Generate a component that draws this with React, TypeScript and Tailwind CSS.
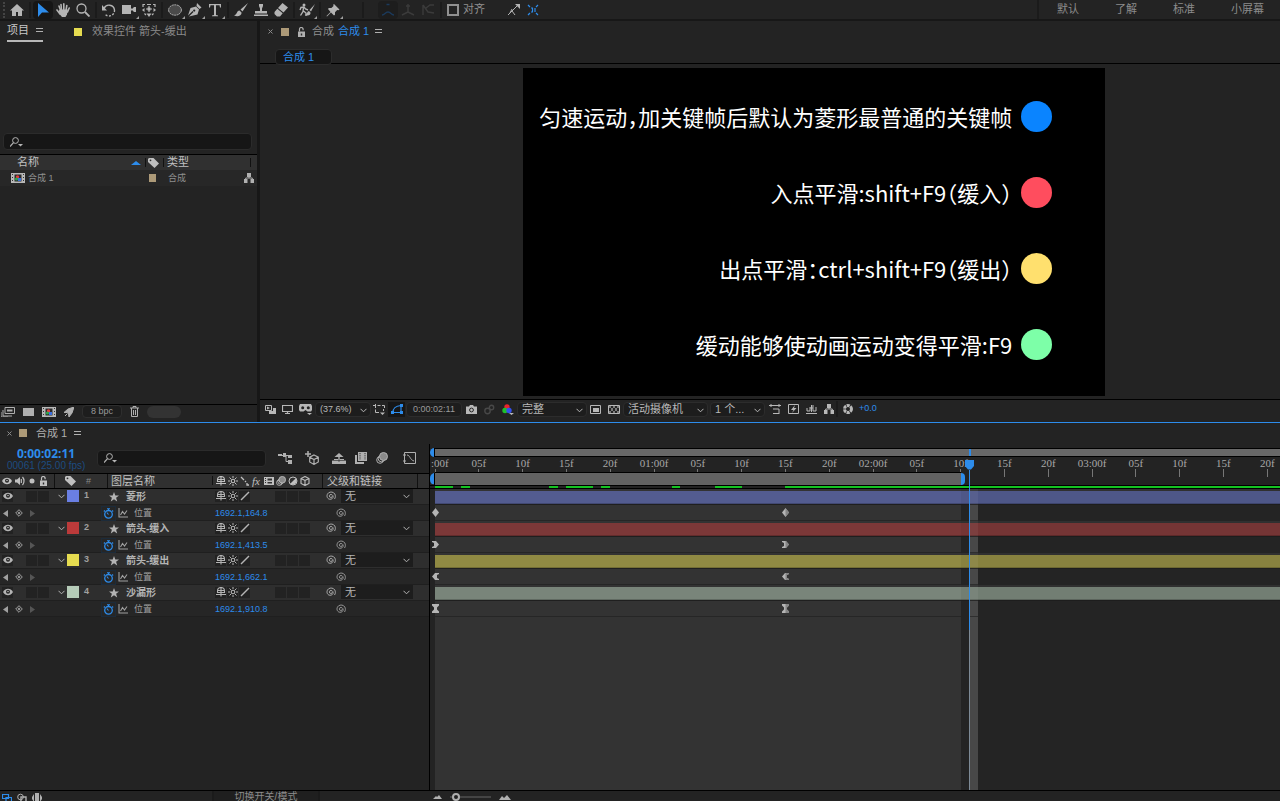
import { ReactNode } from "react";
import clsx from "clsx";

type IconProps = {
  w?: number;
  h?: number;
  box?: string;
  className?: string;
  children: ReactNode;
};

const Icon = ({ w = 14, h = 14, box, className, children }: IconProps) => (
  <svg
    width={w}
    height={h}
    viewBox={box ?? `0 0 ${w} ${h}`}
    fill="currentColor"
    className={clsx("shrink-0", className)}
    aria-hidden="true"
  >
    {children}
  </svg>
);

const line = { fill: "none", stroke: "currentColor" };

const HomeIcon = () => (
  <Icon><path d="M7 1 0 7.500h2V13h4V9h2v4h4V7.500h2z" /></Icon>
);
const ArrowIcon = () => (
  <Icon className="text-[#2d8ceb]"><path d="M2 0v14l4-4.500h7z" /></Icon>
);
const HandIcon = () => (
  <Icon>
    <path d="M3.500 8.500 4.500 7 3 3" {...line} strokeWidth="1.600" strokeLinecap="round" />
    <path d="M5.500 7 5 1.500M7.800 7V.9M10 7.500l.8-5M11.500 9l1.700-4M4 11 1 7" {...line} strokeWidth="1.600" strokeLinecap="round" />
    <path d="M3.500 6.500h8.300L11 11.500 9.500 14H6L3 10.500z" />
  </Icon>
);
const ZoomIcon = () => (
  <Icon>
    <circle cx="5.500" cy="5.500" r="4.500" {...line} strokeWidth="1.300" />
    <path d="m9 9 4.500 4.500" {...line} strokeWidth="1.800" />
  </Icon>
);
const RotateIcon = () => (
  <Icon>
    <path d="M2 5.500A5.500 5.500 0 0 1 12.500 7" {...line} strokeWidth="1.400" />
    <path d="M12.500 7A5.500 5.500 0 0 1 3 11.200" {...line} strokeWidth="1.400" strokeDasharray="2 1.500" />
    <path d="M0 2v5.500h5z" />
  </Icon>
);
const CameraToolIcon = () => (
  <Icon><path d="M0 2h9v3l1 1 2-2h2v5h-2l-2-2-1 1v3H0z" /></Icon>
);
const AnchorIcon = () => (
  <Icon>
    <path d="M5.500 4.500h3v3h-3zM7 14l-2.500-3.500h5zM0 7l2.500-2v4zM14 7l-2.500-2v4z" />
    <path d="M1 4V1.500h2M11 1.500h2V4M5 1.500h4M2.500 10.500l1.500 1.500M11.500 10.500 10 12M7 3v6M4 6h6" {...line} strokeWidth="1.200" />
  </Icon>
);
const EllipseIcon = () => (
  <Icon>
    <ellipse cx="7" cy="7" rx="6.400" ry="5.200" fill="#4a4a4a" stroke="currentColor" strokeDasharray="2 .6" />
  </Icon>
);
const PenIcon = () => (
  <Icon>
    <path d="m9 0 4.500 4.500-2 1.500-3-3zM8 3.500l3 3-1.500 5L1 13.500 5.500 9 4.600 8 0 12.500 2.500 5z" />
    <circle cx="6.200" cy="7.600" r="1.100" fill="#232323" />
  </Icon>
);
const TypeIcon = () => (
  <Icon><path d="M1 1h12v3.500h-1L11.500 2.300H8V12l2 .5v.8H4v-.8l2-.5V2.300H2.500L2 4.500H1z" /></Icon>
);
const BrushIcon = () => (
  <Icon><path d="M14 0 6.500 6.500l2 2zM5.500 7.500c-3 0-2 4-5.500 5 4 1.800 8 0 7.500-3z" /></Icon>
);
const StampIcon = () => (
  <Icon><path d="M5 1h4v2L8 5.500V8h5v2.500H1V8h5V5.500L5 3zM0 11.500h14V13H0z" /></Icon>
);
const EraserIcon = () => (
  <Icon><path d="m8.500 0 5.500 4.500-4.500 5L4 5zM3.300 5.800l5.400 4.500L6 13.500H3L.5 11V9z" /></Icon>
);
const RotoIcon = () => (
  <Icon w={16} box="0 0 16 14">
    <circle cx="5" cy="2" r="1.500" />
    <path d="m1 7 1-2.500 3-.5 1.500 2L9 7M4.500 4.500 4 8.500l-2.500 4M4.500 8 7 10v3" {...line} strokeWidth="1.400" />
    <path d="M16 1 10.500 7l1.500 1.500zM10 8c-2 0-1.500 3-4 4 3 1.500 6 0 5.500-2.500z" />
  </Icon>
);
const PinIcon = () => (
  <Icon><path d="m8 1 5.500 5.500-1 .8-1.300-.3-2.200 2.300v2.500L8 12.500 5 9.500 1 13.500l-.5-.5 4-4-2.500-3 .8-1h2.600L7.500 3 7.200 1.800z" /></Icon>
);
const AxisIcon = ({ d }: { d: string }) => (
  <Icon><path d={d} {...line} strokeWidth="1.400" /></Icon>
);
const SearchGlass = () => (
  <Icon w={14} h={10} className="text-[#b5b5b5]">
    <circle cx="5.500" cy="3.500" r="2.900" {...line} />
    <path d="M3.500 5.700 0 9.500" {...line} strokeWidth="1.200" />
    <path d="M8 7h5l-2.500 2.500z" />
  </Icon>
);
const Chevron = ({ className }: { className?: string }) => (
  <Icon w={7} h={5} className={className}>
    <path d="m.5.8 3 3 3-3" {...line} />
  </Icon>
);
const TagIcon = () => (
  <Icon w={11} h={10}><path d="M0 1 1 0h4.500L11 5.500 6.500 10 0 4z" /><circle cx="2.500" cy="2.300" r=".9" fill="#303030" /></Icon>
);
const CompIcon = () => (
  <Icon w={14} h={10}>
    <path d="M0 0h14v10H0z" fill="#b8b8b8" />
    <path d="M1 1.500h1M1 4.500h1M1 7.500h1M12 1.500h1M12 4.500h1M12 7.500h1" stroke="#333" />
    <path d="M3.500 1.500h7v7h-7z" fill="#2b2b2b" />
    <circle cx="6.500" cy="4" r="1.700" fill="#e23b3b" />
    <circle cx="5.500" cy="6" r="1.600" fill="#2fa84a" />
    <path d="M7 5h3v3H7z" fill="#3a6fe0" />
  </Icon>
);
const FlowIcon = () => (
  <Icon w={10} h={10}>
    <path d="M3 0h4v4H3zM0 6h3.500v4H0zM6.500 6H10v4H6.500z" />
    <path d="M5 3v2M1.700 7V5h6.600v2" {...line} />
  </Icon>
);
const LockIcon = () => (
  <Icon w={8} h={10}>
    <path d="M1 4.500h7V10H1z" />
    <path d="M2.500 4.500V2.300a1.800 1.800 0 0 1 3.600 0v1" {...line} strokeWidth="1.200" />
    <path d="M3.800 6.500h1.400v2H3.800z" fill="#2b2b2b" />
  </Icon>
);
const EyeIcon = () => (
  <Icon w={10} h={8}>
    <path d="M0 4c2.500-4.300 7.500-4.300 10 0-2.500 4.300-7.500 4.300-10 0z" />
    <circle cx="5" cy="3.800" r="2" fill="#262626" />
    <circle cx="5" cy="3.500" r=".8" />
  </Icon>
);
const SpeakerIcon = () => (
  <Icon w={10} h={10}>
    <path d="M0 3.500h2L5 1v8L2 6.500H0z" />
    <path d="M6.300 3v4M7.500 1c2 2.200 2 5.800 0 8" {...line} strokeWidth="1.200" />
  </Icon>
);
const StarIcon = () => (
  <Icon w={10} h={10}><path d="m5 0 1.300 3.400H10L7.100 5.700 8.200 9.500 5 7.300 1.800 9.500l1.100-3.800L0 3.400h3.700z" /></Icon>
);
const ShyIcon = () => (
  <Icon w={10} h={10}>
    <path d="M1.500 5.500V4a3 3 0 0 1 7 0v1.500zM1.500 3.500h7M5 1v8.500M0 7.500h10" {...line} strokeWidth="1.100" />
  </Icon>
);
const SunIcon = () => (
  <Icon w={10} h={10}>
    <circle cx="5" cy="5" r="1.800" {...line} strokeWidth="1.100" />
    <path d="M5 0v2M5 8v2M0 5h2M8 5h2M1.500 1.500 3 3M7 7l1.500 1.500M8.500 1.500 7 3M3 7 1.500 8.500" {...line} />
  </Icon>
);
const SlashIcon = () => (
  <Icon w={10} h={10}><path d="m1 9 3-3 5-5" {...line} strokeWidth="1.500" /></Icon>
);
const CubeIcon = ({ size = 10 }: { size?: number }) => (
  <Icon w={size} h={size} box="0 0 10 10">
    <path d="m5 .5 4 2v5l-4 2-4-2v-5zM1 2.500l4 2 4-2M5 4.500v5" {...line} strokeWidth="1.100" />
  </Icon>
);
const BlurIcon = ({ size = 10 }: { size?: number }) => (
  <Icon w={size} h={size} box="0 0 12 12">
    <circle cx="4" cy="8" r="3.300" {...line} />
    <circle cx="5.500" cy="6.500" r="3.300" {...line} />
    <circle cx="7.500" cy="4.500" r="4" fill="#8a8a8a" stroke="currentColor" />
  </Icon>
);
const FrameBlendIcon = ({ size = 12 }: { size?: number }) => (
  <Icon w={size} h={size} box="0 0 12 12">
    <path d="M3 0h9v9H3z" />
    <path d="M0 3h2v7h7v2H0z" />
    <path d="M5 1v7M10 1v7" stroke="#303030" strokeDasharray="1.200 1" />
  </Icon>
);
const FilmIcon = () => (
  <Icon w={10} h={10}>
    <path d="M0 1h10v8H0z" />
    <path d="M3.500 2.500h4.500v2H3.500zM3.500 6h4.500v1.500H3.500z" fill="#303030" />
    <path d="M1.500 2v6" stroke="#303030" strokeDasharray="1 1" />
  </Icon>
);
const WhipIcon = () => (
  <Icon w={10} h={10}>
    <path d="M6.400 5.200a1.500 1.500 0 1 1-1.300-1.700c1.600.2 2.400 1.600 1.900 3C6.300 8.200 4.200 8.800 2.500 7.800.5 6.500.5 3.500 2.500 1.900c2-1.500 5-1 6.300 1.100.8 1.500.8 3.500-.3 5" {...line} strokeWidth=".9" />
  </Icon>
);
const StopwatchIcon = () => (
  <Icon w={11} h={11} className="text-[#2d8ceb]">
    <circle cx="5.500" cy="6.300" r="3.800" {...line} strokeWidth="1.300" />
    <path d="M4 .7h3M5.500 1v1.500M5.500 6.500 3.800 4.500M9 2.500l1.200 1M2 2.500 .8 3.500" {...line} strokeWidth="1.100" />
  </Icon>
);
const GraphIcon = () => (
  <Icon w={10} h={10}>
    <path d="M1 0v9h9M2.500 7l2-3.500L6.500 6 9 2.500" {...line} strokeWidth="1.100" />
  </Icon>
);

const Sep = () => <span className="w-[6px] h-4 shrink-0 flex justify-center"><span className="w-[2px] bg-[#1b1b1b]" /></span>;

type ToolProps = { label: string; corner?: boolean; active?: boolean; children: ReactNode };

const Tool = ({ label, corner, active, children }: ToolProps) => (
  <button
    aria-label={label}
    className={clsx(
      "relative w-5 h-[18px] shrink-0 flex items-center justify-center rounded-sm",
      active && "bg-[#161616]"
    )}
  >
    {children}
    {corner && (
      <span className="absolute right-0 bottom-0 border-l-[3px] border-b-[3px] border-l-transparent border-b-[#a0a0a0]" />
    )}
  </button>
);

const Toolbar = () => (
  <header className="h-[21px] shrink-0 flex items-center border-b-2 border-[#171717] text-[#b4b4b4]">
    <span className="w-[7px] h-4 shrink-0 flex justify-center">
      <span className="border-l-2 border-dotted border-[#444]" />
    </span>
    <Tool label="主页"><HomeIcon /></Tool>
    <Sep />
    <Tool label="选取工具" active><ArrowIcon /></Tool>
    <Tool label="手形工具"><HandIcon /></Tool>
    <Tool label="缩放工具"><ZoomIcon /></Tool>
    <Sep />
    <Tool label="旋转工具"><RotateIcon /></Tool>
    <Tool label="摄像机工具" corner><CameraToolIcon /></Tool>
    <Tool label="锚点工具"><AnchorIcon /></Tool>
    <Sep />
    <Tool label="椭圆工具" corner><EllipseIcon /></Tool>
    <Tool label="钢笔工具" corner><PenIcon /></Tool>
    <Tool label="文字工具" corner><TypeIcon /></Tool>
    <Sep />
    <Tool label="画笔工具"><BrushIcon /></Tool>
    <Tool label="仿制图章工具"><StampIcon /></Tool>
    <Tool label="橡皮擦工具"><EraserIcon /></Tool>
    <Sep />
    <Tool label="Roto 笔刷工具" corner><RotoIcon /></Tool>
    <Sep />
    <Tool label="人偶位置控点工具" corner><PinIcon /></Tool>
    <div className="ml-[17px] flex items-center text-[#3b3b3b]">
      <Sep />
      <div className="ml-3 flex">
        <span className="text-[#1b3a5c] bg-[#1d1d1d] rounded-sm"><Tool label="本地轴模式"><AxisIcon d="M5.500 1.500h3M1 12c3 0 3-3 6-3s3 3 6 3" /></Tool></span>
        <Tool label="世界轴模式"><AxisIcon d="M7 1v8L1 12M7 9l6 3M5 3h4" /></Tool>
        <Tool label="视图轴模式"><AxisIcon d="M2 12V2M2 2l5 7 6 1M5 5l4-3h4" /></Tool>
      </div>
      <Sep />
    </div>
    <label className="ml-[3px] flex items-center gap-1 text-[11px] text-[#909090]">
      <input type="checkbox" className="appearance-none w-3 h-3 border-2 border-[#909090]" />
      对齐
    </label>
    <button aria-label="对齐边缘" className="ml-[22px]">
      <Icon w={13} h={12}><path d="M1 11 5 7l5-5M5 7l3 4M3 9l2-4" {...line} /><path d="M8 0h5v5l-2-2z" /></Icon>
    </button>
    <button aria-label="对齐要素" className="ml-[7px] text-[#2d8ceb]">
      <Icon w={12} h={12}><path d="m1 1 2 2M11 1 9 3M1 11l2-2M11 11 9 9M4 4h1.500v4H4M8 4v4" {...line} strokeWidth="1.200" /></Icon>
    </button>
    <nav className="ml-auto h-full flex items-center gap-[36px] pl-[18px] pr-[16px] border-l-2 border-[#1b1b1b] text-[11px] text-[#8c8c8c]">
      <a href="#default">默认</a>
      <a href="#learn">了解</a>
      <a href="#standard">标准</a>
      <a href="#small">小屏幕</a>
    </nav>
  </header>
);

const MenuLines = () => (
  <Icon w={7} h={5} className="text-[#b0b0b0]"><path d="M0 0h7v1H0zM0 3h7v1H0z" /></Icon>
);
const CloseIcon = () => (
  <Icon w={5} h={5} className="text-[#8a8a8a]"><path d="m.5.5 4 4M4.500.5l-4 4" {...line} /></Icon>
);

const Cut = () => <span className="absolute left-0 top-[3px] h-[9px] border-l border-[#111]" />;

const ProjectPanel = () => (
  <section className="w-[257px] shrink-0 flex flex-col text-[#a8a8a8]">
    <div className="h-[21px] flex items-center text-[11px]">
      <button className="h-full ml-[7px] flex items-center gap-[7px] border-b-2 border-[#b8b8b8] text-[#c8c8c8]">
        项目
        <MenuLines />
      </button>
      <button className="ml-[31px] flex items-center gap-[10px] text-[11px] text-[#8a8a8a]">
        <span className="w-2 h-2 bg-[#e6dc50]" />
        效果控件 箭头-缓出
      </button>
    </div>
    <label className="mt-[91px] ml-[3px] mr-[5px] h-[17px] flex items-center gap-1 px-[6px] rounded-sm border border-[#2b2b2b] bg-[#161616]">
      <SearchGlass />
      <input type="text" aria-label="搜索项目" className="flex-1 min-w-0 bg-transparent outline-none text-[10px]" />
    </label>
    <table className="mt-1 w-full table-fixed text-left text-[11px] leading-[15px]">
      <thead className="bg-[#303030] border-t border-black text-[#c0c0c0]">
        <tr className="h-[15px]">
          <th className="relative w-[145px] p-0 pl-[17px] font-normal">
            名称
            <span className="absolute right-[4px] top-[6px] border-x-[5px] border-b-[4px] border-x-transparent border-b-[#2d8ceb]" />
          </th>
          <th className="relative w-[18px] p-0 pl-[3px]"><Cut /><TagIcon /></th>
          <th className="relative p-0 pl-[4px] font-normal"><Cut />类型</th>
          <th className="relative w-[7px] p-0"><Cut /></th>
        </tr>
      </thead>
      <tbody className="text-[9px] leading-[16px] bg-[#272727] text-[#8f8f8f]">
        <tr className="h-4">
          <td className="p-0 pl-[11px]"><div className="flex items-center gap-[3px]"><CompIcon />合成 1</div></td>
          <td className="p-0 pl-[4px]"><div className="w-[7px] h-2 bg-[#ad9a78]" /></td>
          <td className="p-0 pl-[5px]">合成</td>
          <td className="relative p-0 text-[#b0b0b0]"><div className="flex justify-end w-[10px] -ml-[6px]"><FlowIcon /></div></td>
        </tr>
      </tbody>
    </table>
    <footer className="mt-auto mb-[3px] h-[15px] border-t border-black flex items-center gap-2 pl-[1px] text-[#b0b0b0]">
      <button aria-label="解释素材"><Icon w={14} h={10}><path d="M4 .5h9.500v6H4zM2 3v6h9M0 5v5h7" {...line} /><path d="M6 2.500h5.500v2H6z" /></Icon></button>
      <button aria-label="新建文件夹"><Icon w={11} h={8}><path d="M0 0h11v8H0z" /></Icon></button>
      <button aria-label="新建合成"><CompIcon /></button>
      <button aria-label="渲染"><Icon w={10} h={10}><path d="M10 0 8 6 5 10 4.500 7 3 5.500 0 5.500 4 2zM1 9l2-2" stroke="currentColor" /></Icon></button>
      <button className="w-[40px] h-[13px] rounded-sm border border-[#2e2e2e] bg-[#1d1d1d] text-[9px] leading-[11px] text-[#9a9a9a]">8 bpc</button>
      <button aria-label="删除"><Icon w={9} h={11}><path d="M0 2h9M3 2V.5h3V2M1.500 2v8.500h6V2M3.500 4v5M5.500 4v5" {...line} /></Icon></button>
      <span className="w-[34px] h-3 rounded-full bg-[#333]" />
    </footer>
  </section>
);

const keys = [
  { text: "匀速运动，加关键帧后默认为菱形最普通的关键帧", dot: "bg-[#0a84ff]" },
  { text: "入点平滑:shift+F9（缓入）", dot: "bg-[#ff4d5e]" },
  { text: "出点平滑：ctrl+shift+F9（缓出）", dot: "bg-[#ffe06e]" },
  { text: "缓动能够使动画运动变得平滑:F9", dot: "bg-[#7dffa8]" },
];

type PickerProps = { label: string; value: string; className: string };

const Picker = ({ label, value, className }: PickerProps) => (
  <span className={clsx("relative h-[15px] flex items-center rounded-sm border border-[#2c2c2c] bg-[#1d1d1d]", className)}>
    <select aria-label={label} className="appearance-none w-full h-[13px] leading-[13px] bg-transparent pl-[4px] outline-none">
      <option>{value}</option>
    </select>
    <Chevron className="absolute right-[3px] top-[5px] pointer-events-none" />
  </span>
);

const ViewerFooter = () => (
  <footer className="mb-[3px] h-5 border-t border-black flex items-center text-[#b8b8b8] text-[11px]">
    <div className="flex items-center gap-[6px] pl-[5px]">
      <button aria-label="始终预览此视图"><Icon w={11} h={9}><path d="M.5.5h6v5h-6z" {...line} /><path d="M2 1.500v3L5 3zM4 6h4V3h3v6H4z" /></Icon></button>
      <button aria-label="主查看器"><Icon w={11} h={9}><path d="M.5.5h10v6H.5zM3 8.500h5M5.500 6.500v2" {...line} strokeWidth="1.200" /></Icon></button>
      <button aria-label="VR"><Icon w={13} h={11}><path d="M1 0h11l1 2v4l-1 1.500H8.500L6.500 6l-2 1.500H1L0 6V2zM8 9h5l-2.500 2z" /><circle cx="3.700" cy="3.700" r="1.500" fill="#232323" /><circle cx="9.300" cy="3.700" r="1.500" fill="#232323" /></Icon></button>
    </div>
    <Picker label="放大率" value="(37.6%)" className="ml-[3px] w-[56px] text-[9px]" />
    <button aria-label="网格和参考线" className="ml-[2px]"><Icon w={12} h={11}><path d="M0 1.500h3M4.500 1.500h3M9 1.500h2.500V4M2.500 0v4M2.500 5.500v3H6M10.500 5v2" {...line} /><path d="M7 8.500h5L9.500 11z" /></Icon></button>
    <button aria-label="蒙版可见性" className="ml-[3px] w-[17px] h-[15px] flex items-center justify-center bg-[#161616] text-[#2d8ceb]"><Icon w={12} h={10}><path d="M2 8.500C2 4 4 2 10 1.500v7z" {...line} strokeWidth="1.200" /><path d="M0 7h3v3H0zM9 0h3v3H9zM9 7h3v3H9z" /></Icon></button>
    <button className="ml-[1px] w-[56px] h-[15px] rounded-sm border border-[#2c2c2c] bg-[#1d1d1d] text-[9px] leading-[13px] text-[#9a9a9a]">0:00:02:11</button>
    <div className="flex items-center gap-[7px] ml-[4px]">
      <button aria-label="拍摄快照"><Icon w={11} h={9}><path d="M0 1.500h3L4 0h3l1 1.500h3V9H0z" /><circle cx="5.500" cy="5" r="1.900" fill="none" stroke="#232323" /></Icon></button>
      <button aria-label="显示快照" className="text-[#484848]"><Icon w={11} h={11}><circle cx="3.500" cy="7" r="2.700" {...line} strokeWidth="1.400" /><circle cx="7.500" cy="3.500" r="2.200" {...line} strokeWidth="1.400" /></Icon></button>
      <button aria-label="显示通道"><Icon w={12} h={11}><circle cx="5" cy="3" r="2.700" fill="#e8232c" /><circle cx="3" cy="6.500" r="2.700" fill="#1fc02c" /><circle cx="7" cy="6.500" r="2.700" fill="#3450ee" /><path d="M7 9h5l-2.500 2z" /></Icon></button>
    </div>
    <Picker label="分辨率" value="完整" className="ml-[3px] w-[70px]" />
    <div className="flex items-center gap-[7px] ml-[3px]">
      <button aria-label="目标区域"><Icon w={11} h={9}><path d="M.5.5h10v8H.5z" {...line} /><path d="M3 3h6v4H3z" /></Icon></button>
      <button aria-label="透明网格"><Icon w={12} h={9}><path d="M.5.5h11v8H.5z" {...line} /><path d="M1 1h2v2H1zM5 1h2v2H5zM9 1h2v2H9zM3 3h2v3H3zM7 3h2v3H7zM1 6h2v2H1zM5 6h2v2H5zM9 6h2v2H9z" fill="#7a7a7a" /></Icon></button>
    </div>
    <Picker label="3D 视图" value="活动摄像机" className="ml-[3px] w-[85px]" />
    <Picker label="视图布局" value="1 个..." className="ml-[2px] w-[55px]" />
    <div className="flex items-center gap-[7px] ml-[4px]">
      <button aria-label="像素长宽比校正"><Icon w={12} h={10}><path d="M0 1.500h12M2 0v3M10 0v3M4 5h6v5M4 9.500h6" {...line} /></Icon></button>
      <button aria-label="快速预览"><Icon w={11} h={10}><path d="M.5.5h10v9H.5z" {...line} /><path d="M7 1 3 6h2.500L4 9l4.500-5H6z" /></Icon></button>
      <button aria-label="时间轴"><Icon w={11} h={9}><path d="M0 8.500h11M1 3v3h3V2M4 3h3M7 0v6h3V2M5.500 0v7" {...line} /></Icon></button>
      <button aria-label="合成流程图"><FlowIcon /></button>
    </div>
    <Sep />
    <button aria-label="重置曝光度" className="ml-[3px]"><Icon w={10} h={10}><circle cx="5" cy="5" r="3.500" {...line} strokeWidth="3" strokeDasharray="3 .7" /></Icon></button>
    <span className="ml-[6px] text-[9px] text-[#2d8ceb]">+0.0</span>
  </footer>
);

const Viewer = () => (
  <section className="flex-1 min-w-0 flex flex-col border-l-[3px] border-[#171717]">
    <div className="h-[21px] flex items-center pl-2 text-[11px] text-[#8f8f8f]">
      <CloseIcon />
      <span className="ml-2 w-2 h-2 bg-[#ad9a78]" />
      <span className="ml-2 text-[#b0b0b0]"><LockIcon /></span>
      <span className="ml-[7px]">合成</span>
      <span className="ml-1 text-[#2d8ceb]">合成 1</span>
      <button aria-label="面板菜单" className="ml-[6px]"><MenuLines /></button>
    </div>
    <div className="h-[22px] pt-[2px] pl-[15px] border-b border-black">
      <button className="w-[57px] h-4 pl-[7px] text-left rounded-sm border border-[#2c2c2c] bg-[#161616] text-[11px] leading-[14px] text-[#2d8ceb]">合成 1</button>
    </div>
    <div className="flex pl-px pt-1 pb-[3px]">
      <div className="flex-[3]" />
      <div className="w-4/7 aspect-video bg-black flex flex-col gap-[45px] pt-[33px] pr-[53px] text-[22px] leading-[31px] text-white font-['Noto_Sans_CJK_SC',sans-serif] [font-feature-settings:'halt']">
        {keys.map((item) => (
          <div key={item.text} className="h-[31px] flex justify-end items-center gap-[9px] whitespace-nowrap">
            {item.text}
            <span className={clsx("w-[31px] h-[31px] rounded-full", item.dot)} />
          </div>
        ))}
      </div>
      <div className="flex-[2]" />
    </div>
    <ViewerFooter />
  </section>
);

type Ease = "linear" | "in" | "out" | "both";

type Layer = {
  id: number;
  name: string;
  swatch: string;
  bar: string;
  position: string;
  ease: Ease;
};

const layers: Layer[] = [
  { id: 1, name: "菱形", swatch: "bg-[#6a7fe3]", bar: "bg-[#535c90]", position: "1692.1,164.8", ease: "linear" },
  { id: 2, name: "箭头-缓入", swatch: "bg-[#bb3a3a]", bar: "bg-[#7c3838]", position: "1692.1,413.5", ease: "in" },
  { id: 3, name: "箭头-缓出", swatch: "bg-[#e6dc50]", bar: "bg-[#908a43]", position: "1692.1,662.1", ease: "out" },
  { id: 4, name: "沙漏形", swatch: "bg-[#b5cbb8]", bar: "bg-[#79857a]", position: "1692.1,910.8", ease: "both" },
];

const easeShapes: Record<Ease, string> = {
  linear: "M3.500 0 7 4.500 3.500 9 0 4.500z",
  in: "M0 1h4l3 3.500L4 8H0V7l2-1V3L0 2z",
  out: "M7 1H3L0 4.500 3 8h4V7L5 6V3l2-1z",
  both: "M0 0h7v1.500L5 3.500v2l2 2V9H0V7.500l2-2v-2l-2-2z",
};

// frames visible on the ruler, counted from the left edge
const VISIBLE = 96.46;
const at = (frame: number) => `${(frame / VISIBLE) * 100}%`;

const ticks = Array.from({ length: 20 }, (_, i) => {
  const frame = i * 5;
  const rest = frame % 25;
  const label = rest === 0 ? `0${frame / 25}:00f` : `${String(rest).padStart(2, "0")}f`;
  return { frame, label: frame === 0 ? ":00f" : label };
});

const cached = [[0, 2], [3, 4], [13, 14], [15, 18], [19, 20], [27, 28], [32, 35], [40, VISIBLE]];

const Cell = ({ children }: { children?: ReactNode }) => (
  <span className="w-[11px] h-[11px] flex items-center justify-center bg-[#222]">{children}</span>
);

const columns = "grid grid-cols-[54px_53px_105px_110px_1fr] items-center";

const ColumnHeads = () => (
  <div className={clsx(columns, "h-4 border-y border-black bg-[#303030] text-[11px] leading-[14px] text-[#c0c0c0]")}>
    <div className="flex items-center gap-[3px] pl-[2px]">
      <EyeIcon />
      <SpeakerIcon />
      <Icon w={8} h={6}><circle cx="4" cy="3" r="2.500" /></Icon>
      <LockIcon />
    </div>
    <div className="flex items-center gap-[10px] pl-[10px] border-l border-[#111]"><TagIcon /><span className="text-[9px] text-[#8a8a8a]">#</span></div>
    <div className="pl-[3px] border-l border-[#111]">图层名称</div>
    <div className="flex items-center gap-[2px] pl-[3px] border-l border-[#111] h-[9px]">
      <ShyIcon />
      <SunIcon />
      <Icon w={10} h={10}><path d="m1 1 3 3M5 5l1 1M7 7v2h2" {...line} strokeWidth="1.300" /></Icon>
      <span className="w-[10px] text-[11px] italic font-['Liberation_Serif',serif]">fx</span>
      <FilmIcon />
      <BlurIcon />
      <Icon w={10} h={10}><circle cx="5" cy="5" r="4" {...line} /><path d="M7.800 2.200a4 4 0 0 1-5.600 5.600z" /></Icon>
      <CubeIcon />
    </div>
    <div className="pl-[4px] border-l border-[#111]">
      <div className="w-[91px] border-r border-[#111]">父级和链接</div>
    </div>
  </div>
);

const LayerRow = ({ layer }: { layer: Layer }) => (
  <div className={clsx(columns, "h-4 border-b border-[#1f1f1f] bg-[#2e2e2e] text-[10px] text-[#b4b4b4]")}>
    <div className="flex items-center pl-[2px]">
      <Cell><EyeIcon /></Cell>
      <span className="ml-[13px] flex gap-px"><Cell /><Cell /></span>
    </div>
    <div className="flex items-center pl-[4px]">
      <Chevron />
      <span className={clsx("ml-[2px] w-3 h-3", layer.swatch)} />
      <span className="ml-[5px] text-[9px] font-bold text-[#a0a0a0]">{layer.id}</span>
    </div>
    <div className="flex items-center gap-[7px] pl-[2px] pt-px leading-[14px] font-bold"><StarIcon />{layer.name}</div>
    <div className="flex items-center gap-px pl-[3px]">
      <Cell><ShyIcon /></Cell>
      <Cell><SunIcon /></Cell>
      <Cell><SlashIcon /></Cell>
      <span className="ml-[24px] flex gap-px"><Cell /><Cell /><Cell /></span>
    </div>
    <div className="flex items-center gap-[5px] pl-[4px]">
      <WhipIcon />
      <span className="relative w-[72px] h-[14px] bg-[#1d1d1d] text-[11px] leading-[14px]">
        <select aria-label={`${layer.name} 父级`} className="appearance-none w-full h-[14px] pl-[4px] bg-transparent outline-none">
          <option>无</option>
        </select>
        <Chevron className="absolute right-[3px] top-[5px] pointer-events-none" />
      </span>
    </div>
  </div>
);

const PropertyRow = ({ layer }: { layer: Layer }) => (
  <div className={clsx(columns, "h-4 pt-[2px] border-b border-[#1f1f1f] bg-[#262626] text-[9px] leading-[13px] text-[#a0a0a0]")}>
    <div className="flex items-center gap-[6px] pl-[3px]">
      <button aria-label="上一个关键帧"><Icon w={6} h={7}><path d="M5 0v7L0 3.500z" /></Icon></button>
      <button aria-label="添加关键帧"><Icon w={8} h={8}><path d="m4 .7 3.300 3.300L4 7.300.7 4z" {...line} /><path d="M4 2.500 5.500 4 4 5.500 2.500 4z" /></Icon></button>
      <button aria-label="下一个关键帧" className="text-[#555]"><Icon w={6} h={7}><path d="M1 0v7l5-3.500z" /></Icon></button>
    </div>
    <span />
    <div className="flex items-center">
      <button aria-label="时间变化秒表" className="-ml-[5px] w-[13px] h-[13px] flex items-center justify-center outline outline-[#1c2b3a]"><StopwatchIcon /></button>
      <span className="ml-[3px]"><GraphIcon /></span>
      <span className="ml-[6px]">位置</span>
    </div>
    <span className="pl-[3px] text-[#2d8ceb]">{layer.position}</span>
    <span className="pl-[14px]"><WhipIcon /></span>
  </div>
);

const Ruler = () => (
  <div className="pt-1">
    <div className="h-[9px] border-y border-black bg-[#686868] relative">
      <span className="absolute -left-[5px] -top-px w-[5px] h-[9px] rounded-l-full border-r border-black bg-[#2d8ceb]" />
      <span className="absolute top-0 h-[7px] w-[2px] bg-[#2d8ceb]" style={{ left: at(61) }} />
    </div>
    <div className="relative h-[28px] bg-[#232323]">
      {ticks.map(({ frame, label }) => (
        <div key={frame} className="absolute top-0 w-0 flex flex-col items-center" style={{ left: at(frame) }}>
          <span
            className={clsx(
              "h-[12px] text-[11px] leading-[12px] whitespace-nowrap text-[#a8a8a8] font-['Liberation_Serif',serif]",
              frame === 0 && "self-start -ml-1"
            )}
          >
            {label}
          </span>
          <span className="h-[8px] border-l border-[#777]" />
        </div>
      ))}
      <div className="absolute bottom-0 left-0 h-[13px] border-t border-black bg-[#626262]" style={{ width: at(60) }}>
        <span className="absolute -left-[5px] top-0 w-[5px] h-3 rounded-l-full border-r border-black bg-[#2d8ceb]" />
        <span className="absolute -right-[4px] top-0 w-[4px] h-3 rounded-r-full bg-[#2d8ceb]" />
      </div>
    </div>
    <div className="relative h-1 -ml-[5px] pl-[5px] border-y border-black bg-[#232323]">
      <div className="relative h-[2px]">
        {cached.map(([from, to]) => (
          <span key={from} className="absolute h-[2px] bg-[#14c322]" style={{ left: at(from), width: at(to - from) }} />
        ))}
      </div>
    </div>
  </div>
);

const Keyframe = ({ ease, frame }: { ease: Ease; frame: number }) => (
  <span className="absolute top-[3px] w-0 flex justify-center" style={{ left: at(frame) }}>
    <svg width="7" height="9" viewBox="0 0 7 9" className="shrink-0" aria-hidden="true">
      <clipPath id={`half-${ease}-${frame}`}><path d="M3.500 0H7v9H3.500z" /></clipPath>
      <path d={easeShapes[ease]} fill="#b5b5b5" />
      {frame > 0 && <path d={easeShapes[ease]} fill="#858585" clipPath={`url(#half-${ease}-${frame})`} />}
    </svg>
  </span>
);

const Tracks = () => (
  <div className="flex-1 relative bg-[#262626]">
    <div className="absolute inset-y-0 left-0 bg-[#333]" style={{ width: at(60) }} />
    <div className="absolute inset-y-0 bg-[#424242]" style={{ left: at(61), width: at(1) }} />
    {layers.map((layer) => (
      <div key={layer.id} className="relative">
        <div className="h-4 pt-[2px] border-b border-[#1f1f1f] bg-[#333]">
          <div className={clsx("h-[13px] border-b border-black/20", layer.bar)} />
        </div>
        <div className="relative h-4 border-b border-[#262626]">
          <Keyframe ease={layer.ease} frame={0} />
          <Keyframe ease={layer.ease} frame={40} />
        </div>
      </div>
    ))}
    <div className="absolute inset-y-0 right-0 bg-black/5" style={{ left: at(60) }} />
    <div className="absolute inset-y-0 bg-white/5" style={{ left: at(61), width: at(1) }} />
  </div>
);

const Timeline = () => (
  <section className="flex-1 min-h-0 flex flex-col border-t border-[#2d8ceb]">
    <div className="h-[21px] shrink-0 flex items-center pl-[7px] text-[11px] text-[#b0b0b0]">
      <CloseIcon />
      <span className="ml-[7px] w-2 h-2 bg-[#ad9a78]" />
      <span className="ml-[9px]">合成 1</span>
      <button aria-label="面板菜单" className="ml-[7px]"><MenuLines /></button>
    </div>
    <div className="flex-1 min-h-0 flex">
      <div className="w-[430px] shrink-0 border-r border-black">
        <div className="h-[29px] flex items-center text-[#b0b0b0]">
          <div className="w-[97px] pt-px flex flex-col items-start pl-[7px]">
            <button className="ml-[10px] text-[12px] leading-[13px] font-bold text-[#2d8ceb] font-['Noto_Sans',sans-serif]">0:00:02:11</button>
            <span className="text-[10px] leading-[11px] text-[#1d4c80]">00061 (25.00 fps)</span>
          </div>
          <label className="w-[169px] h-[17px] flex items-center gap-1 px-[6px] rounded-sm border border-[#2b2b2b] bg-[#161616]">
            <SearchGlass />
            <input type="text" aria-label="搜索图层" className="flex-1 min-w-0 bg-transparent outline-none text-[10px]" />
          </label>
          <div className="flex items-center ml-3 gap-[13px]">
            <button aria-label="合成微型流程图"><Icon w={14} h={11}><path d="M0 1h4v2H0zM5 0h3v4H5zM10 2h4v3h-4zM10 7h4v4h-4z" /><path d="M3 2.500h8M8 3v5.500h3" {...line} /></Icon></button>
            <button aria-label="草图 3D"><Icon w={14} h={14}><path d="M3 0v6M0 3h6" {...line} strokeWidth="1.500" /><path d="m9 4 4.300 2.200v4.800L9 13.400 4.700 11V6.200zM4.700 6.200 9 8.500l4.300-2.300M9 8.500v5" {...line} strokeWidth="1.200" /></Icon></button>
            <button aria-label="隐藏图层"><Icon w={14} h={11}><path d="M7 0 2.500 4H6v2H2v1H0v4h14V7h-2V6H8V4h3.500z" /><path d="M0 7.500h14M7 4v5" stroke="#232323" strokeWidth=".6" /></Icon></button>
          </div>
          <div className="flex items-center ml-[9px] gap-[9px]">
            <button aria-label="帧混合"><FrameBlendIcon /></button>
            <button aria-label="运动模糊"><BlurIcon size={12} /></button>
            <button aria-label="图表编辑器" className="ml-[6px]"><Icon w={13} h={12}><path d="M1.500.5h11v11h-11zM0 3h3M0 9h3M4 3c3 0 3 5 7 6" {...line} /></Icon></button>
          </div>
        </div>
        <ColumnHeads />
        {layers.map((layer) => (
          <div key={layer.id}>
            <LayerRow layer={layer} />
            <PropertyRow layer={layer} />
          </div>
        ))}
      </div>
      <div className="relative flex-1 min-w-0 pl-[5px] flex flex-col overflow-hidden">
        <Ruler />
        <Tracks />
        <div className="absolute left-[5px] right-0 top-4 bottom-0 pointer-events-none">
          <div className="absolute inset-y-0 w-0 flex flex-col items-center" style={{ left: at(61) }}>
            <Icon w={9} h={10} className="text-[#2d8ceb]"><path d="M0 0h9v6L6 9.500H3L0 6z" /></Icon>
            <span className="flex-1 w-px bg-gradient-to-b from-[#2d8ceb] from-50% to-[#7d8a96] to-50%" />
          </div>
        </div>
      </div>
    </div>
    <footer className="h-[11px] shrink-0 overflow-hidden border-t border-black flex items-start text-[#b0b0b0]">
      <div className="w-[430px] shrink-0 flex pl-[2px]">
        <div className="w-[210px] flex gap-[5px] pt-px">
          <button aria-label="图层开关" className="text-[#2d8ceb]"><Icon w={10} h={10}><path d="M.5 1.500h6v4h-6zM4 4.500h5.500v4H4z" {...line} strokeWidth="1.200" /></Icon></button>
          <button aria-label="转换控制"><Icon w={10} h={10}><circle cx="3.500" cy="4" r="2.800" {...line} /><path d="M4 4h5v5H4z" {...line} strokeWidth="1.400" /></Icon></button>
          <button aria-label="入点出点"><Icon w={10} h={10}><path d="M3 0h4v10H3zM2 1 0 4v2l2 3zM8 1l2 3v2L8 9z" /></Icon></button>
        </div>
        <button className="w-[108px] h-3 border-x-2 border-[#1b1b1b] bg-[#1f1f1f] text-[10px] leading-[12px] text-[#8c8c8c]">切换开关/模式</button>
      </div>
      <label className="flex items-center gap-2 pl-[3px] h-3">
        <Icon w={9} h={4}><path d="m0 4 3-3 1 1 2-2 3 4z" /></Icon>
        <input
          type="range"
          aria-label="时间轴缩放"
          defaultValue={5}
          className="appearance-none w-[41px] h-[2px] bg-[#444] [&::-webkit-slider-thumb]:appearance-none [&::-webkit-slider-thumb]:w-2 [&::-webkit-slider-thumb]:h-2 [&::-webkit-slider-thumb]:rounded-full [&::-webkit-slider-thumb]:border-2 [&::-webkit-slider-thumb]:border-[#b0b0b0] [&::-webkit-slider-thumb]:bg-[#232323]"
        />
        <Icon w={12} h={5}><path d="m0 5 3-4 2 2 3-3 4 5z" /></Icon>
      </label>
    </footer>
  </section>
);

const App = () => (
  <div
    lang="zh-CN"
    className="h-screen flex flex-col overflow-hidden bg-[#232323] font-['Liberation_Sans','Noto_Sans_CJK_SC',sans-serif]"
  >
    <Toolbar />
    <main className="flex-1 min-h-0 flex flex-col">
      <div className="shrink-0 flex">
        <ProjectPanel />
        <Viewer />
      </div>
      <Timeline />
    </main>
  </div>
);

export default App;
